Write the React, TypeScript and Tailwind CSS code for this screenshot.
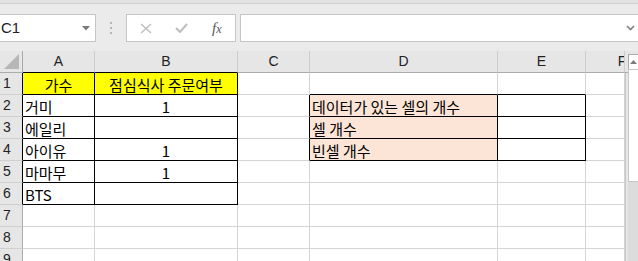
import React from 'react';

const cols = [
  { key: 'A', w: 'w-[72px]' },
  { key: 'B', w: 'w-[143px]' },
  { key: 'C', w: 'w-[72px]' },
  { key: 'D', w: 'w-[188px]' },
  { key: 'E', w: 'w-[88px]' },
  { key: 'F', w: 'w-[39px]' },
];

type Row = { n: number; A?: string; B?: string; D?: string };

const rows: Row[] = [
  { n: 1, A: '가수', B: '점심식사 주문여부' },
  { n: 2, A: '거미', B: '1', D: '데이터가 있는 셀의 개수' },
  { n: 3, A: '에일리', B: '', D: '셀 개수' },
  { n: 4, A: '아이유', B: '1', D: '빈셀 개수' },
  { n: 5, A: '마마무', B: '1' },
  { n: 6, A: 'BTS', B: '' },
  { n: 7 },
  { n: 8 },
  { n: 9 },
];

// which grid lines are drawn as black cell borders
const borderCls = (r: number, c: string) => {
  const inSingers = r >= 1 && r <= 6 && (c === 'A' || c === 'B');
  const inCount = r >= 2 && r <= 4 && (c === 'D' || c === 'E');
  const rightBlack = inSingers || inCount || (r >= 2 && r <= 4 && c === 'C');
  const bottomBlack = inSingers || inCount || (r === 1 && (c === 'D' || c === 'E'));
  return `${rightBlack ? 'border-r-black' : 'border-r-[#d4d4d4]'} ${
    bottomBlack ? 'border-b-black' : 'border-b-[#d4d4d4]'
  }`;
};

const cellBg = (r: number, c: string) => {
  if (r === 1 && (c === 'A' || c === 'B')) return 'bg-[#ffff00]';
  if (r >= 2 && r <= 4 && c === 'D') return 'bg-[#fce4d6]';
  return 'bg-white';
};

const FormulaBar = () => (
  <div className="h-[51px] flex flex-col">
    <div className="h-[3px] bg-[#e3e3e3]" />
    <div className="h-px bg-[#d2d2d2]" />
    <div className="flex-1 bg-[#ebebeb] flex items-start pt-[10px]">
      {/* name box */}
      <div className="w-[96px] h-[28px] bg-white border-y border-r border-[#c6c6c6] flex items-center justify-between pl-[1px] pr-[5px]">
        <span className="text-[15px] text-[#222] font-['Liberation_Sans',sans-serif]">C1</span>
        <svg width="8" height="5" viewBox="0 0 8 5">
          <path d="M0 0h8L4 4.5z" fill="#7a7a7a" />
        </svg>
      </div>
      <div className="w-[30px] h-[28px] flex flex-col items-center justify-center gap-[3px]">
        <span className="w-[2px] h-[2px] bg-[#b5b5b5]" />
        <span className="w-[2px] h-[2px] bg-[#b5b5b5]" />
        <span className="w-[2px] h-[2px] bg-[#b5b5b5]" />
      </div>
      {/* cancel / enter / fx */}
      <div className="w-[110px] h-[28px] bg-white border border-[#c6c6c6] flex items-center pl-[13px]">
        <svg width="12" height="11" viewBox="0 0 12 11">
          <path d="M1 1l10 9M11 1L1 10" stroke="#bdbdbd" strokeWidth="1.4" />
        </svg>
        <svg width="13" height="10" viewBox="0 0 13 10" className="ml-[23px]">
          <path d="M1 5l4 4 7-8" stroke="#bdbdbd" strokeWidth="2" fill="none" />
        </svg>
        <span className="ml-[24px] text-[15px] italic text-[#555] font-['Liberation_Serif',serif] leading-none">
          f<span className="text-[12px]">x</span>
        </span>
      </div>
      {/* formula input */}
      <div className="ml-[4px] flex-1 h-[28px] bg-white border-y border-l border-[#c6c6c6] flex items-center justify-end pr-[3px]">
        <svg width="9" height="6" viewBox="0 0 9 6">
          <path d="M1 1l3.5 3.5L8 1" stroke="#808080" strokeWidth="1.6" fill="none" />
        </svg>
      </div>
    </div>
  </div>
);

const HeaderRow = () => (
  <div className="flex h-[22px] bg-[#e6e6e6]">
    <div className="w-[23px] border-r border-b border-r-[#ababab] border-b-[#ababab] flex items-end justify-end">
      <svg width="15" height="15" viewBox="0 0 15 15" className="mr-[3px] mb-[3px]">
        <path d="M15 0V15H0z" fill="#b6b6b6" />
      </svg>
    </div>
    {cols.map((c) => (
      <div
        key={c.key}
        className={`${c.w} ${
          c.key === 'A' || c.key === 'B' ? 'border-b-black' : 'border-b-[#ababab]'
        } border-r border-b border-r-[#cdcdcd] flex items-center justify-center text-[14px] text-[#222] font-['Liberation_Sans',sans-serif] ${
          c.key === 'F' ? 'pl-[34px] overflow-hidden' : ''
        }`}
      >
        {c.key}
      </div>
    ))}
    <div className="w-[3px] border-b border-[#ababab]" />
  </div>
);

const text = (r: Row, c: string) => {
  if (c === 'A') return r.A;
  if (c === 'B') return r.B;
  if (c === 'D') return r.D;
  return undefined;
};

const align = (r: Row, c: string) =>
  (r.n === 1 && (c === 'A' || c === 'B')) || (c === 'B' && r.n > 1) ? 'justify-center' : 'justify-start';

const Sheet = () => (
  <div className="w-[628px]">
    <HeaderRow />
    {rows.map((r) => (
      <div key={r.n} className="flex h-[22px]">
        <div
          className={`w-[23px] bg-[#e6e6e6] border-r border-b border-b-[#d0d0d0] ${
            r.n <= 6 ? 'border-r-black' : 'border-r-[#ababab]'
          } flex items-center pl-[3px] text-[14px] text-[#222] font-['Liberation_Sans',sans-serif]`}
        >
          {r.n}
        </div>
        {cols.map((c) => (
          <div
            key={c.key}
            className={`${c.w} ${cellBg(r.n, c.key)} ${borderCls(r.n, c.key)} border-r border-b flex items-center ${align(
              r,
              c.key,
            )} px-[2px] pt-px whitespace-nowrap text-[15px] text-black font-['Noto_Sans_CJK_KR',sans-serif] leading-none`}
          >
            {text(r, c.key)}
          </div>
        ))}
        <div className="w-[3px] bg-[#e6e6e6] border-l border-[#c6c6c6]" />
      </div>
    ))}
  </div>
);

const Scrollbar = () => (
  <div className="w-[10px] bg-[#e6e6e6] pt-[3px] flex flex-col">
    <div className="h-[15px] bg-white border-t border-l border-[#ababab] flex items-center justify-center">
      <svg width="7" height="4" viewBox="0 0 7 4">
        <path d="M0 4h7L3.5 0z" fill="#7a7a7a" />
      </svg>
    </div>
    <div className="h-[113px] bg-white border-l border-t border-b border-[#c6c6c6]" />
    <div className="flex-1 bg-[#dcdcdc]" />
  </div>
);

export default function App() {
  return (
    <div className="w-[638px] h-[261px] overflow-hidden bg-[#e6e6e6]">
      <FormulaBar />
      <div className="flex h-[210px]">
        <Sheet />
        <Scrollbar />
      </div>
    </div>
  );
}
